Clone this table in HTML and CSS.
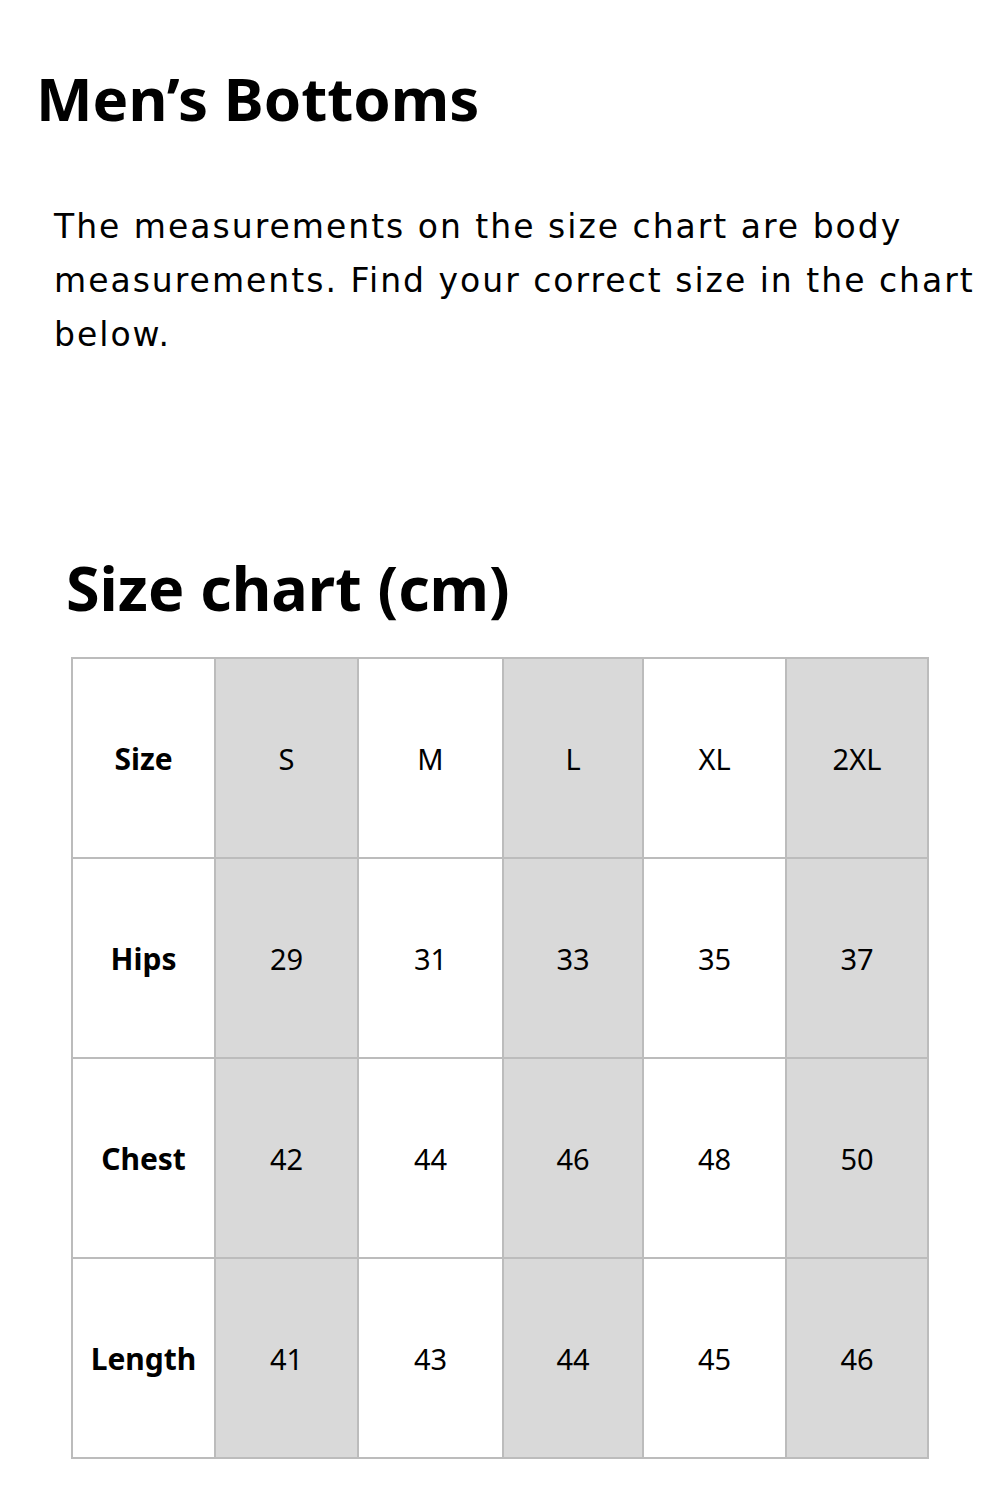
FILE: index.html
```html
<!DOCTYPE html>
<html lang="en">
<head>
<meta charset="utf-8">
<title>Men’s Bottoms</title>
<link rel="stylesheet" href="styles.css">
</head>
<body>
<main class="page">
  <h1 class="title">Men’s Bottoms</h1>
  <p class="intro">The measurements on the size chart are body measurements. Find your correct size in the chart below.</p>
  <h2 class="chart-title">Size chart (cm)</h2>
  <div class="chart">
    <div class="cell head">Size</div>
    <div class="cell shade">S</div>
    <div class="cell">M</div>
    <div class="cell shade">L</div>
    <div class="cell">XL</div>
    <div class="cell shade">2XL</div>

    <div class="cell head">Hips</div>
    <div class="cell shade">29</div>
    <div class="cell">31</div>
    <div class="cell shade">33</div>
    <div class="cell">35</div>
    <div class="cell shade">37</div>

    <div class="cell head">Chest</div>
    <div class="cell shade">42</div>
    <div class="cell">44</div>
    <div class="cell shade">46</div>
    <div class="cell">48</div>
    <div class="cell shade">50</div>

    <div class="cell head">Length</div>
    <div class="cell shade">41</div>
    <div class="cell">43</div>
    <div class="cell shade">44</div>
    <div class="cell">45</div>
    <div class="cell shade">46</div>
  </div>
</main>
</body>
</html>
```

FILE: styles.css
```css
* { box-sizing: border-box; }
html, body { margin: 0; padding: 0; background: #fff; }
body {
  width: 1000px;
  height: 1500px;
  color: #000;
  font-family: "Noto Sans", "Open Sans", sans-serif;
}
.page {
  display: flex;
  flex-direction: column;
  align-items: flex-start;
}
.title {
  margin: 62px 0 0 36px;
  font-size: 60px;
  line-height: 72px;
  font-weight: 700;
}
.intro {
  margin: 66px 0 0 54px;
  width: 940px;
  font-family: "DejaVu Sans", "Noto Sans", sans-serif;
  font-size: 33px;
  line-height: 54px;
  font-weight: 400;
  letter-spacing: 2px;
}
.chart-title {
  margin: 189px 0 0 66px;
  font-size: 61px;
  line-height: 74px;
  font-weight: 700;
}
.chart {
  margin: 32px 0 0 71px;
  width: 858px;
  display: grid;
  grid-template-columns: 141px 141px 143px 138px 141px 140px;
  grid-auto-rows: 198px;
  gap: 2px;
  padding: 2px;
  background: #bcbcbc;
}
.cell {
  background: #fff;
  display: flex;
  align-items: center;
  justify-content: center;
  font-size: 29px;
  font-weight: 400;
}
.cell.shade { background: #d9d9d9; }
.cell.head { font-size: 30px; font-weight: 700; }
```
